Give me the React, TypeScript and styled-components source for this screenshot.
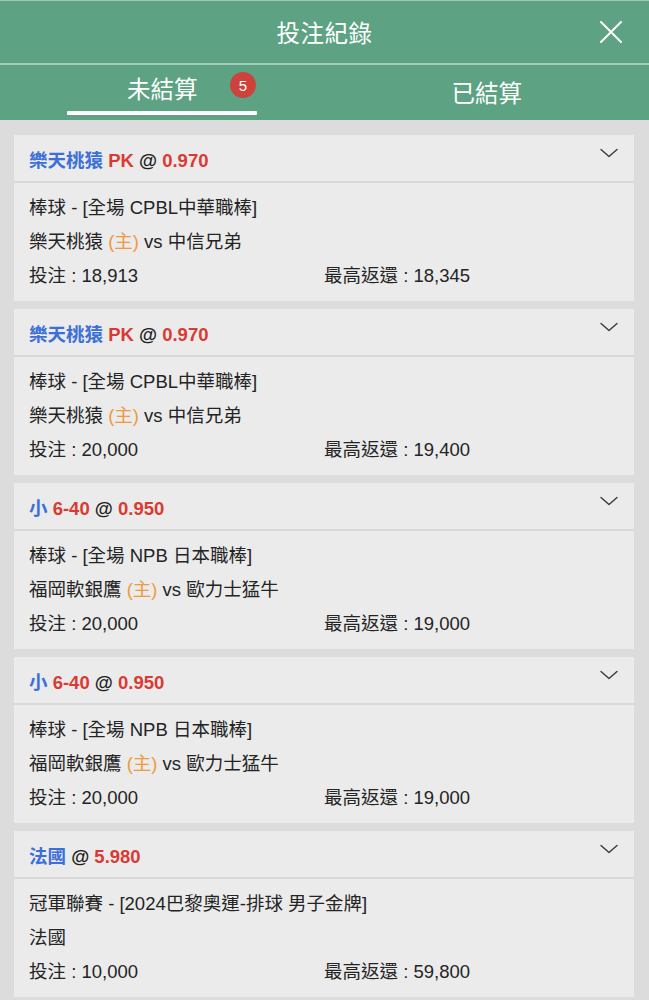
import React from "react";
import styled, { createGlobalStyle } from "styled-components";

const GlobalStyle = createGlobalStyle`
  html, body { margin: 0; padding: 0; background: #dcdcdc; }
  body { font-family: "Liberation Sans", "Noto Sans CJK TC", sans-serif; }
  * { box-sizing: border-box; }
`;

const Page = styled.div`
  width: 649px;
  min-height: 1000px;
  background: #dcdcdc;
`;

const TopBar = styled.header`
  height: 63px;
  background: #5ca283;
  border-top: 1px solid #9dc8b4;
  display: flex;
  align-items: center;
  justify-content: center;
  position: relative;
`;

const Title = styled.h1`
  margin: 0;
  font-size: 23.5px;
  font-weight: 400;
  color: #ffffff;
  letter-spacing: 0.5px;
`;

const CloseButton = styled.button`
  position: absolute;
  right: 26px;
  top: 19px;
  width: 24px;
  height: 24px;
  padding: 0;
  border: none;
  background: transparent;
  display: flex;
`;

const Divider = styled.div`
  height: 2px;
  background: #a3cdb9;
`;

const TabBar = styled.nav`
  height: 55px;
  background: #5ca283;
  display: grid;
  grid-template-columns: 1fr 1fr;
`;

const Tab = styled.div<{ $active?: boolean }>`
  position: relative;
  display: flex;
  flex-direction: column;
  align-items: center;
  padding-top: ${(p) => (p.$active ? "10px" : "14px")};
`;

const TabLabel = styled.span`
  position: relative;
  font-size: 23.5px;
  color: #ffffff;
  line-height: 31px;
`;

const Badge = styled.span`
  position: absolute;
  left: 103px;
  top: -3px;
  width: 26px;
  height: 26px;
  border-radius: 50%;
  background: #cd433b;
  color: #fff;
  font-size: 15px;
  display: flex;
  align-items: center;
  justify-content: center;
`;

const Underline = styled.div`
  margin-top: 5px;
  width: 190px;
  height: 4px;
  background: #ffffff;
  border-radius: 1px;
`;

const List = styled.main`
  padding: 15px 15px 0 14px;
  display: flex;
  flex-direction: column;
  gap: 8px;
`;

const Card = styled.section`
  background: #ebebeb;
`;

const CardHead = styled.div`
  height: 48px;
  display: flex;
  align-items: center;
  justify-content: space-between;
  padding: 1px 16px 0 15px;
  border-bottom: 2px solid #d9d9d9;
  font-size: 18.5px;
  font-weight: 700;
`;

const HeadText = styled.div`
  white-space: nowrap;
`;

const ChevronBox = styled.span`
  display: flex;
  margin-bottom: 12px;
`;

const Pick = styled.span`
  color: #3c6fd9;
`;

const Odds = styled.span`
  color: #da3a33;
`;

const At = styled.span`
  color: #1f1f1f;
`;

const CardBody = styled.div`
  padding: 8px 15px 8px 15px;
  font-size: 18.5px;
  color: #242424;
`;

const Line = styled.div`
  line-height: 34px;
  white-space: nowrap;
`;

const Home = styled.span`
  color: #ee9a3e;
`;

const Amounts = styled.div`
  display: grid;
  grid-template-columns: 1fr 1fr;
  line-height: 34px;
`;

const Chevron = () => (
  <svg width="18" height="10" viewBox="0 0 18 10" fill="none">
    <polyline points="1,1.5 9,8.5 17,1.5" stroke="#3a3a3a" strokeWidth="1.4" strokeLinecap="round" strokeLinejoin="round" />
  </svg>
);

type Bet = {
  pick: string;
  mark?: string;
  odds: string;
  league: string;
  home?: string;
  away?: string;
  team?: string;
  stake: string;
  ret: string;
};

const bets: Bet[] = [
  { pick: "樂天桃猿", mark: "PK", odds: "0.970", league: "棒球 - [全場 CPBL中華職棒]", home: "樂天桃猿", away: "中信兄弟", stake: "18,913", ret: "18,345" },
  { pick: "樂天桃猿", mark: "PK", odds: "0.970", league: "棒球 - [全場 CPBL中華職棒]", home: "樂天桃猿", away: "中信兄弟", stake: "20,000", ret: "19,400" },
  { pick: "小", mark: "6-40", odds: "0.950", league: "棒球 - [全場 NPB 日本職棒]", home: "福岡軟銀鷹", away: "歐力士猛牛", stake: "20,000", ret: "19,000" },
  { pick: "小", mark: "6-40", odds: "0.950", league: "棒球 - [全場 NPB 日本職棒]", home: "福岡軟銀鷹", away: "歐力士猛牛", stake: "20,000", ret: "19,000" },
  { pick: "法國", odds: "5.980", league: "冠軍聯賽 - [2024巴黎奧運-排球 男子金牌]", team: "法國", stake: "10,000", ret: "59,800" },
];

export default function App() {
  return (
    <>
      <GlobalStyle />
      <Page>
        <TopBar>
          <Title>投注紀錄</Title>
          <CloseButton aria-label="close">
            <svg width="24" height="24" viewBox="0 0 24 24" fill="none">
              <path d="M2 2 L22 22 M22 2 L2 22" stroke="#ffffff" strokeWidth="2" strokeLinecap="round" />
            </svg>
          </CloseButton>
        </TopBar>
        <Divider />
        <TabBar>
          <Tab $active>
            <TabLabel>
              未結算
              <Badge>5</Badge>
            </TabLabel>
            <Underline />
          </Tab>
          <Tab>
            <TabLabel>已結算</TabLabel>
          </Tab>
        </TabBar>
        <List>
          {bets.map((b, i) => (
            <Card key={i}>
              <CardHead>
                <HeadText>
                  <Pick>{b.pick}</Pick>{" "}
                  {b.mark && <><Odds>{b.mark}</Odds>{" "}</>}
                  <At>@</At> <Odds>{b.odds}</Odds>
                </HeadText>
                <ChevronBox>
                  <Chevron />
                </ChevronBox>
              </CardHead>
              <CardBody>
                <Line>{b.league}</Line>
                <Line>
                  {b.team ? b.team : <>{b.home} <Home>(主)</Home> vs {b.away}</>}
                </Line>
                <Amounts>
                  <span>投注 : {b.stake}</span>
                  <span>最高返還 : {b.ret}</span>
                </Amounts>
              </CardBody>
            </Card>
          ))}
        </List>
      </Page>
    </>
  );
}
